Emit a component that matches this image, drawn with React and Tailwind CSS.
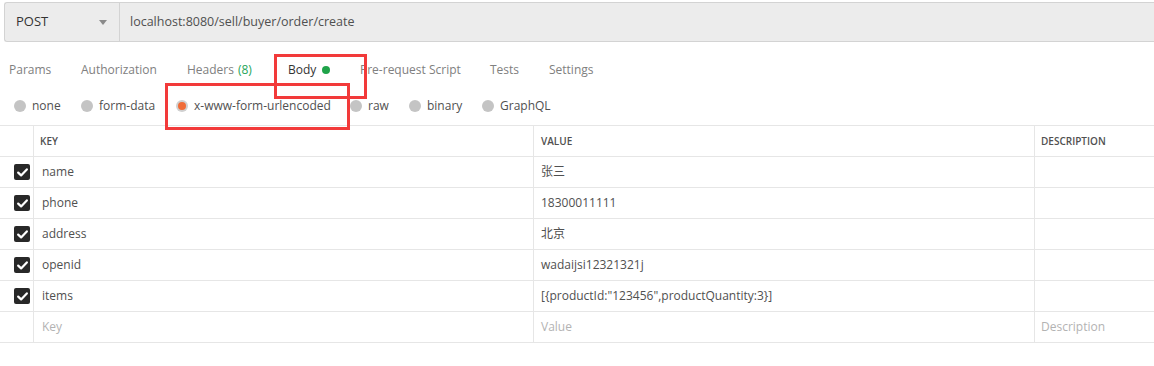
import React from 'react'

const font = { fontFamily: '"Open Sans", "Noto Sans CJK SC", sans-serif' }

const tabs = [
  { label: 'Params', w: 'w-[72px]' },
  { label: 'Authorization', w: 'w-[106px]' },
  { label: 'Headers', w: 'w-[101px]', count: '(8)' },
  { label: 'Body', w: 'w-[72px]', active: true },
  { label: 'Pre-request Script', w: 'w-[130px]' },
  { label: 'Tests', w: 'w-[59px]' },
  { label: 'Settings', w: 'w-[80px]' },
]

const bodyTypes = [
  { label: 'none', w: 'w-[67px]' },
  { label: 'form-data', w: 'w-[95px]' },
  { label: 'x-www-form-urlencoded', w: 'w-[174px]', checked: true },
  { label: 'raw', w: 'w-[59px]' },
  { label: 'binary', w: 'w-[73px]' },
  { label: 'GraphQL', w: 'w-[90px]' },
]

const rows = [
  ['name', '张三'],
  ['phone', '18300011111'],
  ['address', '北京'],
  ['openid', 'wadaijsi12321321j'],
  ['items', '[{productId:"123456",productQuantity:3}]'],
]

function Check() {
  return (
    <span className="w-[16px] h-[16px] rounded-[2px] bg-[#282828] flex items-center justify-center">
      <svg width="11" height="9" viewBox="0 0 11 9">
        <path d="M1.2 4.6 L4.1 7.4 L9.8 1.4" stroke="#fff" strokeWidth="2.2" fill="none" strokeLinecap="round" strokeLinejoin="round" />
      </svg>
    </span>
  )
}

function Row({ left, keyText, value, desc, header, placeholder }) {
  const txt = header
    ? 'text-[10px] font-semibold text-[#505050]'
    : placeholder
      ? 'text-[12px] text-[#b3b3b3]'
      : 'text-[12px] text-[#505050]'
  return (
    <div className="flex h-[31px] border-b border-[#e6e6e6]">
      <div className="w-[34px] border-r border-[#e6e6e6] flex items-center pl-[14px]">{left}</div>
      <div className={`w-[500px] border-r border-[#e6e6e6] flex items-center ${header ? 'pl-[6px]' : 'pl-[8px]'} ${txt}`}>{keyText}</div>
      <div className={`w-[501px] border-r border-[#e6e6e6] flex items-center pl-[7px] ${txt}`}>{value}</div>
      <div className={`flex-1 flex items-center pl-[6px] ${txt}`}>{desc}</div>
    </div>
  )
}

export default function App() {
  return (
    <div className="w-[1154px] h-[366px] bg-white relative overflow-hidden" style={font}>
      {/* request bar */}
      <div className="pt-[2px] pl-[4px]">
        <div className="h-[40px] flex border border-[#d3d3d3] border-r-0 bg-[#ececec] rounded-l-[3px]">
          <div className="w-[115px] border-r border-[#d3d3d3] flex items-center justify-between pl-[11px] pr-[12px]">
            <span className="text-[13px] text-[#333]">POST</span>
            <svg width="8" height="5" viewBox="0 0 8 5"><path d="M0 0 H8 L4 5 Z" fill="#8a8a8a" /></svg>
          </div>
          <div className="flex items-center pl-[10px] text-[12.5px] text-[#505050]">localhost:8080/sell/buyer/order/create</div>
        </div>
      </div>

      {/* tabs */}
      <div className="h-[56px] flex items-center pl-[9px]">
        {tabs.map(t => (
          <div key={t.label} className={`${t.w} flex items-center text-[12px] ${t.active ? 'text-[#333]' : 'text-[#808080]'}`}>
            {t.label}
            {t.count && <span className="ml-[4px] text-[#26a65b]">{t.count}</span>}
            {t.active && <span className="ml-[6px] w-[8px] h-[8px] rounded-full bg-[#1fa34a]" />}
          </div>
        ))}
      </div>

      {/* body type radios */}
      <div className="h-[16px] flex items-center pl-[14px]">
        {bodyTypes.map(b => (
          <div key={b.label} className={`${b.w} flex items-center gap-[6px] text-[12px] text-[#505050]`}>
            {b.checked ? (
              <span className="w-[12px] h-[12px] rounded-full bg-[#d0d0d0] flex items-center justify-center">
                <span className="w-[8px] h-[8px] rounded-full bg-[#f06c38]" />
              </span>
            ) : (
              <span className="w-[12px] h-[12px] rounded-full bg-[#c4c4c4]" />
            )}
            {b.label}
          </div>
        ))}
      </div>

      {/* table */}
      <div className="mt-[11px] border-t border-[#e6e6e6]">
        <Row header keyText="KEY" value="VALUE" desc="DESCRIPTION" />
        {rows.map(([k, v]) => (
          <Row key={k} left={<Check />} keyText={k} value={v} />
        ))}
        <Row placeholder keyText="Key" value="Value" desc="Description" />
      </div>

      {/* highlight boxes */}
      <div className="absolute left-[274px] top-[54px] w-[93px] h-[45px] border-[3px] border-[#f23a3a]" />
      <div className="absolute left-[165px] top-[83px] w-[185px] h-[47px] border-[3px] border-[#f23a3a]" />
    </div>
  )
}
